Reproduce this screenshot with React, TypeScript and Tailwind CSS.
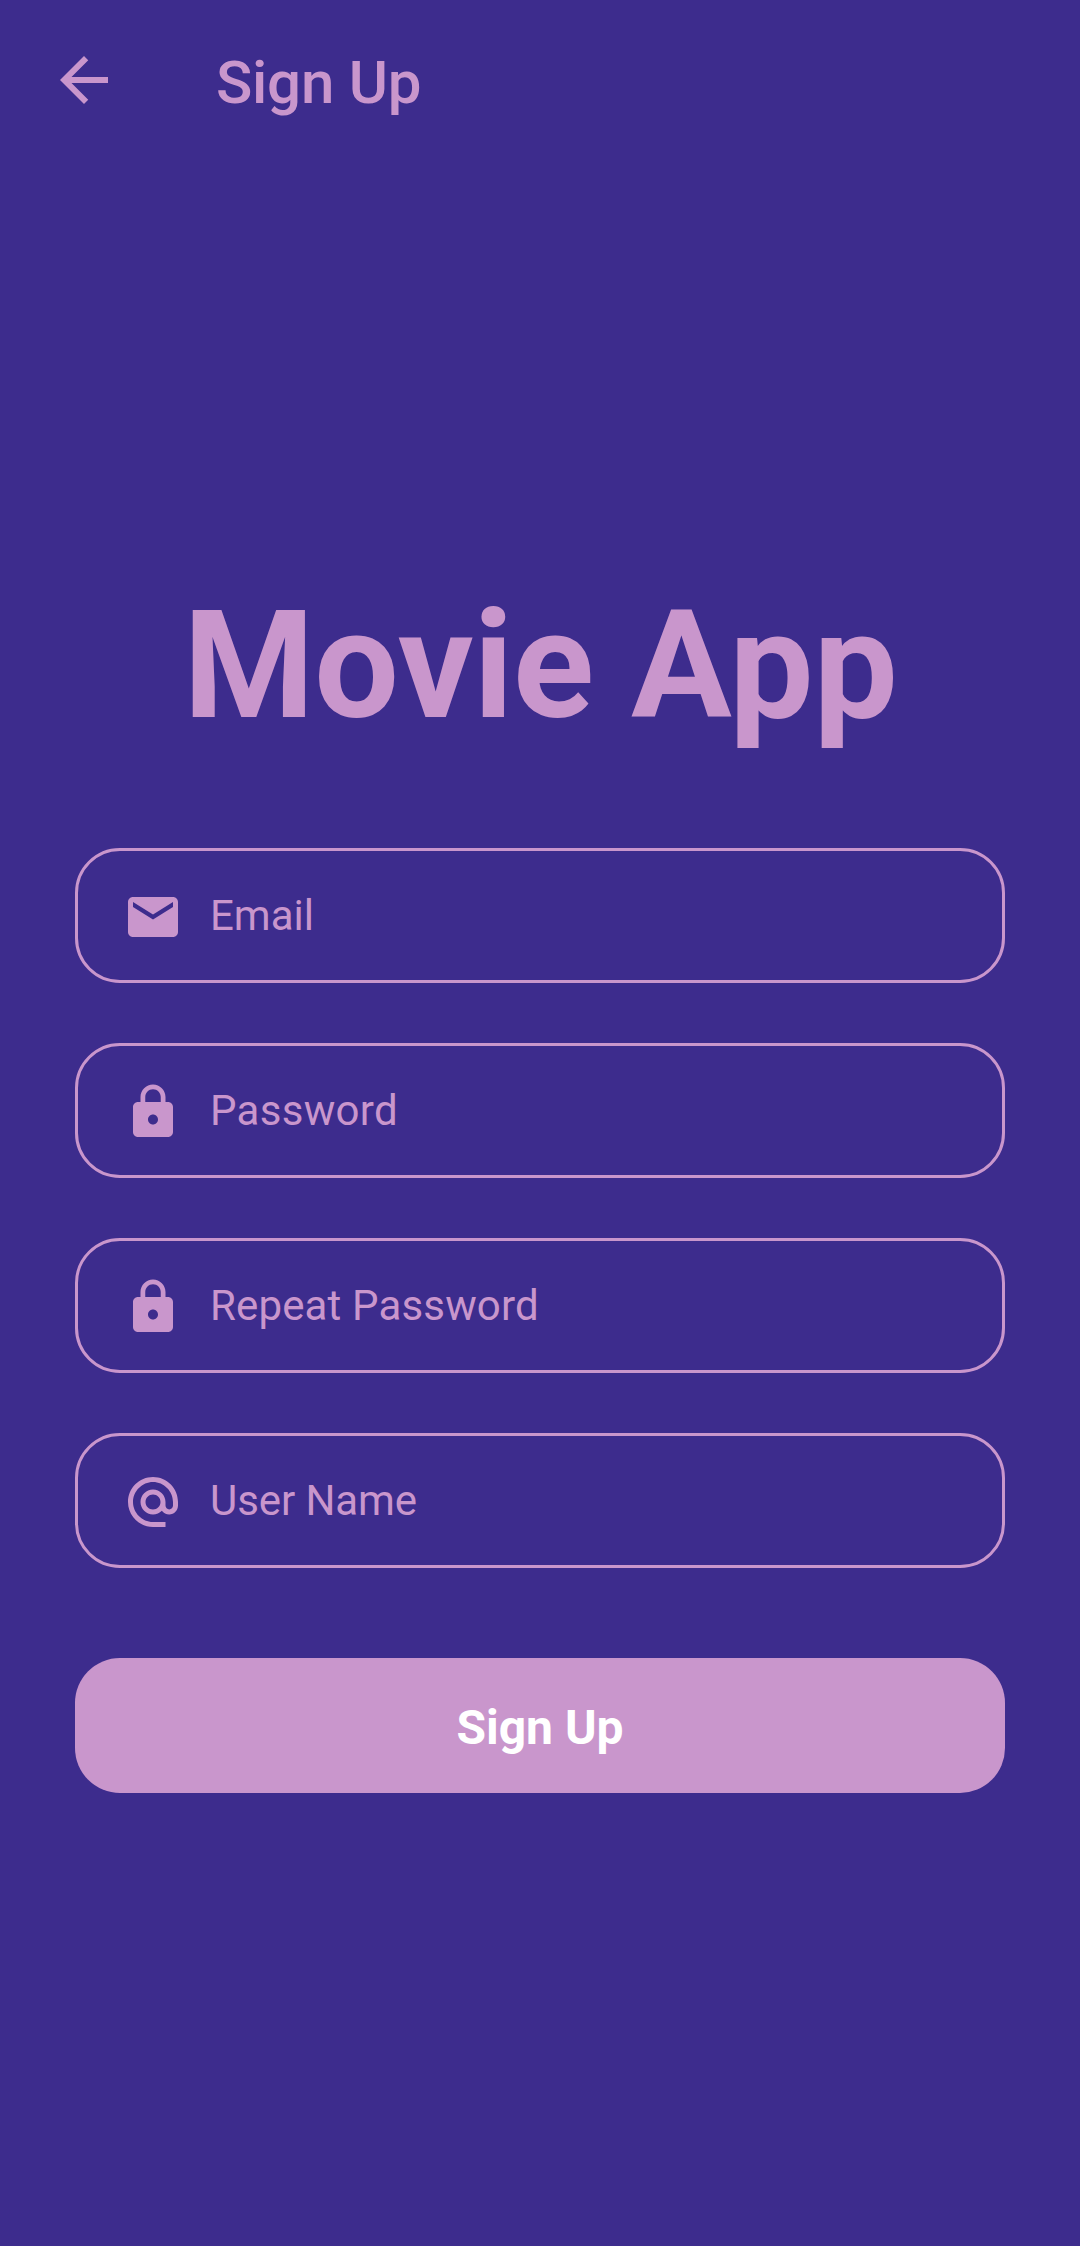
import React from "react";
import { MdEmail, MdLock, MdAlternateEmail, MdArrowBack } from "react-icons/md";

const fields = [
  { label: "Email", Icon: MdEmail, tracking: "tracking-normal" },
  { label: "Password", Icon: MdLock, tracking: "tracking-[0.3px]" },
  { label: "Repeat Password", Icon: MdLock, tracking: "tracking-[0.15px]" },
  { label: "User Name", Icon: MdAlternateEmail, tracking: "tracking-[-0.08px]" },
];

export default function App() {
  return (
    <div className="h-[2246px] w-[1080px] overflow-hidden bg-[#3d2c8d] font-['Roboto',sans-serif] text-[#c996cc]">
      <header className="flex h-[160px] items-center pl-12">
        <button aria-label="Back" className="block">
          <MdArrowBack size={72} />
        </button>
        <h1 className="ml-24 pt-[5px] text-[60px] font-medium leading-none tracking-[-0.25px] whitespace-nowrap">Sign Up</h1>
      </header>
      <main className="flex flex-col px-[75px] pt-[418px]">
        <h2 className="pl-px text-center text-[150px] font-bold leading-[176px] tracking-[-0.15px] whitespace-nowrap">Movie App</h2>
        <form className="mt-[94px] flex flex-col gap-[60px]">
          {fields.map(({ label, Icon, tracking }) => (
            <label key={label} className="flex h-[135px] items-center rounded-[45px] border-[3px] border-[#c996cc] pl-[45px]">
              <Icon size={60} className="mt-0.5" />
              <span className={`ml-[27px] text-[42px] leading-none ${tracking}`}>{label}</span>
            </label>
          ))}
          <button type="button" className="mt-[30px] h-[135px] rounded-[45px] bg-[#c996cc] pt-[5px] text-[48px] font-bold text-white">
            Sign Up
          </button>
        </form>
      </main>
    </div>
  );
}
